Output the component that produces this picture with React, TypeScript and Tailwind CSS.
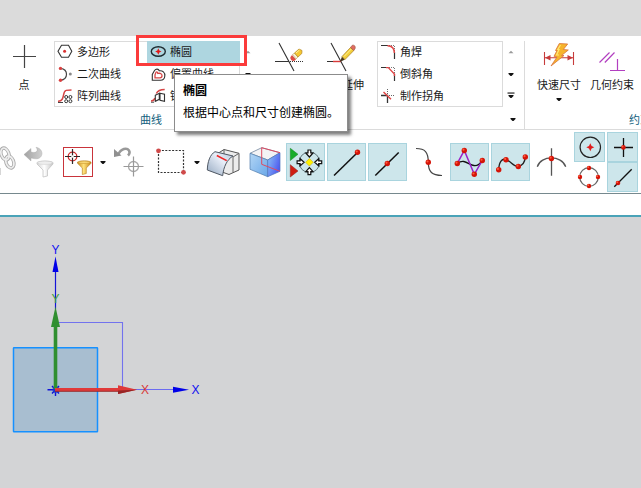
import React, { useState } from 'react'
import clsx from 'clsx'

interface GalleryItem {
  id: string
  label: string
  icon: React.ReactNode
}

interface DotProps {
  x: number
  y: number
  r?: number
}

function Dot({ x, y, r = 2.7 }: DotProps) {
  return (
    <g>
      <circle cx={x} cy={y} r={r} fill="#d41408" />
      <circle cx={x - 0.8} cy={y - 0.8} r={r * 0.4} fill="#ff5a3c" />
    </g>
  )
}

function Crosshair({ x, y, r, arm, ring, line }: { x: number; y: number; r: number; arm: number; ring: string; line: string }) {
  return (
    <g fill="none">
      <circle cx={x} cy={y} r={r} stroke={ring} strokeWidth="1.3" />
      <path d={`M${x - arm} ${y}H${x + arm}M${x} ${y - arm}V${y + arm}`} stroke={line} strokeWidth="1.2" />
    </g>
  )
}

function SmallIcon({ children }: { children: React.ReactNode }) {
  return (
    <svg viewBox="0 0 16 16" className="h-4 w-4 shrink-0" fill="none" aria-hidden="true">
      {children}
    </svg>
  )
}

function LargeIcon({ children }: { children: React.ReactNode }) {
  return (
    <svg viewBox="0 0 36 36" className="h-9 w-9" fill="none" aria-hidden="true">
      {children}
    </svg>
  )
}

const curveItems: GalleryItem[] = [
  {
    id: 'polygon',
    label: '多边形',
    icon: (
      <SmallIcon>
        <path d="M1 7.3L4.5 1.3H11.5L14.8 7.3L11.5 13.3H4.5Z" stroke="#333" strokeWidth="1.1" />
        <circle cx="7.6" cy="7.3" r="1.5" fill="#d93030" />
      </SmallIcon>
    ),
  },
  {
    id: 'ellipse',
    label: '椭圆',
    icon: (
      <SmallIcon>
        <ellipse cx="8.3" cy="7.5" rx="7" ry="4.8" stroke="#1d2b30" strokeWidth="1.4" />
        <path d="M8.3 4.3L9.3 6.5L11.5 7.5L9.3 8.5L8.3 10.7L7.3 8.5L5.1 7.5L7.3 6.5Z" fill="#e01818" />
      </SmallIcon>
    ),
  },
  {
    id: 'conic',
    label: '二次曲线',
    icon: (
      <SmallIcon>
        <path d="M3.5 2.3C11.5 3.3 11.5 13.3 3.5 14.3" stroke="#444" strokeWidth="1.2" />
        <circle cx="3.5" cy="2.4" r="1.7" fill="#d94040" />
        <circle cx="3.5" cy="14.3" r="1.7" fill="#d94040" />
        <circle cx="13.3" cy="8" r="1.5" fill="#888" />
      </SmallIcon>
    ),
  },
  {
    id: 'offset',
    label: '偏置曲线',
    icon: (
      <SmallIcon>
        <path d="M2.3 14.3V8.5L4.5 4.5C6 2.5 8.5 2.8 9.3 4.8C12.5 4.2 15.2 6.5 14.8 10C14.6 13 13 14.3 10.5 14.3Z" stroke="#333" strokeWidth="1.1" />
        <path d="M5 11.8V8.8L6 6.3C6.8 5.5 7.5 6 7.8 7.4C10.5 6.8 12.2 8 12 9.8C12 11.2 11.3 11.8 10 11.8Z" stroke="#d64545" strokeWidth="1.3" />
      </SmallIcon>
    ),
  },
  {
    id: 'pattern',
    label: '阵列曲线',
    icon: (
      <SmallIcon>
        <path d="M1 14.5H6" stroke="#444" />
        <path d="M1 13.2C8.5 13.5 5 3 9 2.4C10.5 2 12.5 2 14.5 2" stroke="#d64545" strokeWidth="1.5" />
        <g stroke="#333">
          <circle cx="9.2" cy="9" r="1.5" />
          <circle cx="13.4" cy="9" r="1.5" />
          <circle cx="9.2" cy="13.2" r="1.5" />
          <circle cx="13.4" cy="13.2" r="1.5" />
        </g>
      </SmallIcon>
    ),
  },
  {
    id: 'mirror',
    label: '镜像曲线',
    icon: (
      <SmallIcon>
        <path d="M1 14.2H4" stroke="#444" />
        <path d="M1 13C4 13 4.5 11.5 5 10M6.3 5.5C8 2 11 1.5 14.7 1.5" stroke="#d64545" strokeWidth="1.5" />
        <path d="M5.3 7.3L9.3 5.3V11.3L5.3 13.3ZM10 5.3L14.5 6.3V13.3L10 12.3Z" stroke="#333" strokeWidth="1.1" />
      </SmallIcon>
    ),
  },
]

const editItems: GalleryItem[] = [
  {
    id: 'fillet',
    label: '角焊',
    icon: (
      <SmallIcon>
        <path d="M1 1.5H8M14.5 8V15" stroke="#333" strokeWidth="1.2" />
        <path d="M9 1.5H14.5V8" stroke="#777" strokeDasharray="1 1" />
        <path d="M7.5 1.7C11.5 1.8 14.3 4.5 14.4 9" stroke="#e04545" strokeWidth="1.4" />
      </SmallIcon>
    ),
  },
  {
    id: 'chamfer',
    label: '倒斜角',
    icon: (
      <SmallIcon>
        <path d="M1 1.5H8M14.5 8V15" stroke="#333" strokeWidth="1.2" />
        <path d="M9 1.5H14.5V8" stroke="#777" strokeDasharray="1 1" />
        <path d="M6 1.6H8.3L14.4 8V10" stroke="#e04545" strokeWidth="1.4" />
      </SmallIcon>
    ),
  },
  {
    id: 'corner',
    label: '制作拐角',
    icon: (
      <SmallIcon>
        <path d="M1 7.5H7.5V15" stroke="#333" strokeWidth="1.3" />
        <path d="M7.5 1V7.5H14.5" stroke="#666" strokeDasharray="1 1" />
        <path d="M3.5 4L11 11.3" stroke="#e04545" strokeWidth="1.5" />
      </SmallIcon>
    ),
  },
]

function Caret({ up = false, bar = false }: { up?: boolean; bar?: boolean }) {
  return (
    <svg viewBox="0 0 8 8" className="h-2 w-2" aria-hidden="true">
      {bar && <path d="M0.5 0.5H7.5V1.6H0.5Z" fill="#111" />}
      {up ? <path d="M1.5 5.2H6.5L4 2.7Z" fill="#9a9a9a" /> : <path d="M1.5 3H6.5V4L4.5 6H3.5L1.5 4Z" fill="#111" />}
    </svg>
  )
}

function GalleryScroll() {
  return (
    <div className="flex w-4 flex-col">
      <button className="flex h-[22px] items-center justify-center" aria-label="上一行"><Caret up /></button>
      <button className="flex h-[22px] items-center justify-center" aria-label="下一行"><Caret /></button>
      <button className="flex h-[22px] items-center justify-center" aria-label="更多"><Caret bar /></button>
    </div>
  )
}

interface GalleryButtonProps {
  item: GalleryItem
  active?: boolean
  onClick?: () => void
  children?: React.ReactNode
}

function GalleryButton({ item, active, onClick, children }: GalleryButtonProps) {
  return (
    <div className="relative">
      <button
        onClick={onClick}
        className={clsx('flex h-[22px] w-full items-center gap-1 pl-[3px] whitespace-nowrap', active && 'bg-[#aed6e0]')}
      >
        {item.icon}
        <span className="pb-0.5">{item.label}</span>
      </button>
      {children}
    </div>
  )
}

function RibbonButton({ label, icon, caret = false }: { label: string; icon: React.ReactNode; caret?: boolean }) {
  return (
    <button className="flex w-[52px] shrink-0 flex-col items-center leading-[14px] whitespace-nowrap">
      {icon}
      <span>{label}</span>
      {caret && <span className="flex h-4 items-center"><Caret /></span>}
    </button>
  )
}

function EllipseTooltip() {
  return (
    <div
      role="tooltip"
      className="absolute top-[33px] left-[27px] z-20 w-[174px] border border-[#8c8c8c] bg-white px-2 pt-1 pb-2 text-xs leading-[22px] whitespace-nowrap text-black shadow-[3px_3px_3px_rgba(0,0,0,0.5)]"
    >
      <p className="font-bold">椭圆</p>
      <p>根据中心点和尺寸创建椭圆。</p>
    </div>
  )
}

function Ribbon() {
  const [activeCurve, setActiveCurve] = useState('ellipse')

  return (
    <header className="flex items-start border-b border-[#dbdbdb] bg-white pt-[5px] text-[11px] text-[#1a1a1a]">
      <button className="flex w-12 shrink-0 flex-col items-center leading-[14px]">
        <LargeIcon>
          <path d="M7 15.5H30M18.5 4V27" stroke="#444" strokeWidth="1.2" />
        </LargeIcon>
        <span>点</span>
      </button>

      {/* Curve gallery */}
      <section className="shrink-0 pl-1.5">
        <div className="flex">
          <div className="grid w-[186px] grid-cols-2 outline -outline-offset-1 outline-[#dbdbdb]">
            {curveItems.map((item) => (
              <GalleryButton key={item.id} item={item} active={item.id === activeCurve} onClick={() => setActiveCurve(item.id)}>
                {item.id === 'ellipse' && (
                  <>
                    <div className="pointer-events-none absolute -top-1.5 -right-[7px] -bottom-[3px] -left-[11px] z-10 border-3 border-[#fb3b3b]" />
                    <EllipseTooltip />
                  </>
                )}
              </GalleryButton>
            ))}
          </div>
          <GalleryScroll />
        </div>
        <div className="flex h-[22px] items-center justify-center pt-0.5 pr-2 text-[#12607c]">曲线</div>
      </section>

      {/* Trim and extend */}
      <div className="flex shrink-0 pl-2">
        <button className="flex w-[52px] justify-center" aria-label="快速修剪">
          <LargeIcon>
            <path d="M7 2L22 30M3 20.5H17.5" stroke="#333" strokeWidth="1.1" />
            <path d="M18 20.5H32" stroke="#333" strokeDasharray="1 1" />
            <path d="M20 14L24 18.5L22 20C19 20 18 17.5 18.5 16Z" fill="#dc4d45" />
            <path d="M20.5 13.5L22.5 12L26 16L24 18Z" fill="#f6f0d8" stroke="#b79b55" strokeWidth="0.6" />
            <path d="M22.5 12L27 8L30 9.5L29.8 12.5L26 16Z" fill="#f5c832" stroke="#b28422" strokeWidth="0.7" />
            <path d="M24 12L27.5 9" stroke="#fff2a0" />
          </LargeIcon>
        </button>
        <RibbonButton
          label="快速延伸"
          icon={
            <LargeIcon>
              <path d="M7 2L22 30M3 20.5H9" stroke="#333" strokeWidth="1.1" />
              <path d="M9 20.5H17" stroke="#d93a3a" strokeWidth="1.4" />
              <path d="M16 21L18 15.5L21 18.5Z" fill="#4a3a20" />
              <path d="M18 15.5L26.5 6.5L29.8 9.5L21 18.5Z" fill="#f3cf3a" stroke="#a67d23" strokeWidth="0.7" />
              <path d="M26.5 6.5L28 4.5C30 3.3 32 5.3 31 7.8L29.8 9.5Z" fill="#df6d62" stroke="#9c5240" strokeWidth="0.6" />
              <path d="M20 15.5L27.3 8" stroke="#fff19a" />
            </LargeIcon>
          }
        />
      </div>

      {/* Corner gallery */}
      <section className="shrink-0 pr-[5px] pl-[9px]">
        <div className="flex">
          <div className="w-[126px] outline -outline-offset-1 outline-[#dbdbdb]">
            {editItems.map((item) => (
              <GalleryButton key={item.id} item={item} />
            ))}
          </div>
          <GalleryScroll />
        </div>
        <div className="flex h-[22px] items-center justify-end pt-0.5">
          <button className="flex h-4 w-3 items-center justify-center" aria-label="曲线选项"><Caret /></button>
        </div>
      </section>

      {/* Constraints */}
      <section className="w-[231px] shrink-0 border-l border-[#dbdbdb]">
        <div className="flex h-[66px] gap-px pl-2">
          <RibbonButton
            label="快速尺寸"
            caret
            icon={
              <LargeIcon>
                <path d="M3.5 11V24M32.5 11V24M4 16.7H32" stroke="#c73c3c" strokeWidth="1.1" />
                <path d="M4 16.7L9.5 14V19.4ZM32 16.7L26.5 14V19.4Z" fill="#c73c3c" />
                <path d="M18.3 2.5L26.7 3L22.3 8.5L27.3 9L20.5 14.5H23L10 25L16 16L13 15.3L16 9.5H14.5Z" fill="#f6b42c" stroke="#d9743a" strokeWidth="0.8" />
                <path d="M19.5 4L16.8 8.5H18L15.5 14H18" stroke="#ffe672" strokeWidth="1.2" />
              </LargeIcon>
            }
          />
          <RibbonButton
            label="几何约束"
            icon={
              <LargeIcon>
                <path d="M5.5 21.5L15.5 11.5M10.8 21.5L20.5 11.5M23.5 18V29.5M16 29.5H31" stroke="#b23fc0" strokeWidth="1.2" />
              </LargeIcon>
            }
          />
        </div>
        <div className="flex h-[22px] items-center justify-center pt-0.5 text-[#12607c]">约束</div>
      </section>
    </header>
  )
}

function ToolIcon({ label, children }: { label: string; children: React.ReactNode }) {
  return (
    <button className="w-10 shrink-0" aria-label={label}>
      <svg viewBox="0 0 40 38" className="h-[38px] w-10" fill="none">
        {children}
      </svg>
    </button>
  )
}

interface SnapButtonProps {
  label: string
  on?: boolean
  small?: boolean
  children: React.ReactNode
}

function SnapButton({ label, on = true, small = false, children }: SnapButtonProps) {
  const [pressed, setPressed] = useState(on)

  return (
    <button
      aria-label={label}
      aria-pressed={pressed}
      onClick={() => setPressed(!pressed)}
      className={clsx(
        'shrink-0 border',
        small ? 'h-[30px] w-[31px]' : 'h-[38px] w-[39px]',
        pressed ? 'border-[#a9d4de] bg-[#cde6eb]' : 'border-transparent'
      )}
    >
      <svg viewBox={small ? '0 0 29 28' : '0 0 37 36'} className="h-full w-full" fill="none">
        {children}
      </svg>
    </button>
  )
}

function DropButton({ label }: { label: string }) {
  return (
    <button className="flex h-[30px] w-3.5 shrink-0 items-center justify-center" aria-label={label}>
      <Caret />
    </button>
  )
}

function Toolbar() {
  return (
    <div className="flex items-center border-b border-[#76898e] bg-white pt-0.5 pb-px">
      <svg viewBox="0 0 20 38" className="h-[38px] w-5 shrink-0" fill="none" aria-hidden="true">
        <g stroke="#aaa" strokeWidth="3.4">
          <ellipse cx="5" cy="11" rx="3.8" ry="6.2" transform="rotate(-20 5 11)" />
          <ellipse cx="9.8" cy="19" rx="3.8" ry="6.2" transform="rotate(-20 9.8 19)" />
        </g>
        <g stroke="#eee" strokeWidth="1.7">
          <ellipse cx="5" cy="11" rx="3.8" ry="6.2" transform="rotate(-20 5 11)" />
          <ellipse cx="9.8" cy="19" rx="3.8" ry="6.2" transform="rotate(-20 9.8 19)" />
        </g>
        <path d="M0 25H0.8V32H0Z" fill="#ccc" />
      </svg>
      <ToolIcon label="重置过滤器">
        <defs>
          <linearGradient id="greyFunnel">
            <stop offset="0" stopColor="#d2d2d2" />
            <stop offset="0.45" stopColor="#fff" />
            <stop offset="1" stopColor="#c4c4c4" />
          </linearGradient>
          <linearGradient id="greyArrow" x1="0" y1="0" x2="1" y2="0">
            <stop offset="0" stopColor="#a2a2a2" />
            <stop offset="1" stopColor="#d0d0d0" />
          </linearGradient>
        </defs>
        <path d="M4 11.5L11 5.5V9C16 10.5 19 8 16 4.3C21 5 23.5 10 21 13.5C19 16.5 15 16 11 15V18Z" fill="url(#greyArrow)" stroke="#a5a5a5" strokeWidth="0.4" />
        <path d="M17 19.5C20 17.5 30 17.5 33 19.5V21L27.5 27V33L23 34V27L17 21Z" fill="url(#greyFunnel)" stroke="#c4c4c4" strokeWidth="0.8" />
        <ellipse cx="25" cy="19.8" rx="7.6" ry="1.6" fill="#eee" stroke="#ccc" strokeWidth="0.5" />
      </ToolIcon>
      <button className="mx-[3px] h-[30px] w-[30px] shrink-0 border border-[#c9343b]" aria-label="选择过滤器">
        <svg viewBox="0 0 28 28" className="h-full w-full" fill="none">
          <defs>
            <linearGradient id="goldFunnel">
              <stop offset="0" stopColor="#c9891c" />
              <stop offset="0.45" stopColor="#ffe27b" />
              <stop offset="1" stopColor="#c78617" />
            </linearGradient>
          </defs>
          <Crosshair x={8.5} y={8.5} r={4.3} arm={7.5} ring="#cf2b2b" line="#302828" />
          <circle cx="8.5" cy="8.5" r="1.2" fill="#fff" />
          <path d="M13.5 14C16 12.5 24.5 12.5 27 14V15.3L22.3 20V25.5L18.3 26.5V20L13.5 15.3Z" fill="url(#goldFunnel)" stroke="#b67d1c" strokeWidth="0.6" />
          <ellipse cx="20.2" cy="14.3" rx="5.8" ry="1.2" fill="#f7d777" stroke="#c38a20" strokeWidth="0.5" />
        </svg>
      </button>
      <DropButton label="过滤器选项" />
      <ToolIcon label="重置捕捉点">
        <path d="M8 12C11 5 17 4.5 19 7.5C20 9 19.5 11 18 12.5" stroke="#999" strokeWidth="2.5" />
        <path d="M4 14V6L11.5 12.5Z" fill="#909090" />
        <Crosshair x={23.5} y={23.5} r={5} arm={10} ring="#aaa" line="#999" />
      </ToolIcon>
      <ToolIcon label="矩形选择">
        <rect x="8.5" y="7.5" width="25" height="22" stroke="#333" strokeWidth="1.2" strokeDasharray="2 1.4" />
        <circle cx="8.5" cy="7.8" r="2.4" fill="#d04a4a" />
        <circle cx="33.5" cy="29.3" r="2.4" fill="#d04a4a" />
      </ToolIcon>
      <DropButton label="选择方式" />
      <ToolIcon label="面规则">
        <defs>
          <linearGradient id="sheet" x1="0" y1="1" x2="1" y2="0">
            <stop offset="0" stopColor="#94a8c0" />
            <stop offset="0.6" stopColor="#e8eef8" />
            <stop offset="1" stopColor="#b7c5d8" />
          </linearGradient>
        </defs>
        <path d="M14.5 10L20 6.5L35 10.3V27L25 31.5L18 29V14Z" fill="#ececec" stroke="#555" />
        <path d="M35 10.3L29 14V29.5M20 6.5V12" stroke="#666" />
        <path d="M3.3 27C3.5 19 6 11.5 11 8.7L29 13C23 16.5 19.5 24 18.7 32.7Z" fill="url(#sheet)" stroke="#4f5864" />
        <path d="M12.8 12.5L22.7 17.6" stroke="#f02525" strokeWidth="1.6" />
      </ToolIcon>
      <ToolIcon label="实体">
        <defs>
          <linearGradient id="cubeLeft" x1="0" y1="0" x2="1" y2="1">
            <stop offset="0" stopColor="#b3d6f5" />
            <stop offset="1" stopColor="#69a7e8" />
          </linearGradient>
          <linearGradient id="cubeRight" x1="0" y1="0" x2="1" y2="0.6">
            <stop offset="0" stopColor="#8ec9f5" />
            <stop offset="1" stopColor="#4e58ef" />
          </linearGradient>
        </defs>
        <path d="M6 10.3L17.7 4.7L36 9.7L23.7 17Z" fill="#f3f3f5" stroke="#5f7590" strokeWidth="0.7" />
        <path d="M6 10.3L23.7 17V33.7L6 26.3Z" fill="url(#cubeLeft)" stroke="#517dac" strokeWidth="0.7" />
        <path d="M23.7 17L36 9.7V28.3L23.7 33.7Z" fill="url(#cubeRight)" stroke="#4f75bb" strokeWidth="0.7" />
        <path d="M36 9.7L17.7 4.7V21.3L36 28.3" stroke="#dd4a62" />
      </ToolIcon>

      {/* Snap point toggles */}
      <div className="ml-0.5 flex items-center gap-0.5">
        <SnapButton label="启用捕捉点">
          <circle cx="22.4" cy="18.3" r="10.3" stroke="#62777d" />
          <path d="M3.3 4.3L11 10.3L3.3 16.5Z" fill="#18ad2b" stroke="#168427" strokeWidth="0.5" />
          <path d="M3.3 20.7L11 27L3.3 33Z" fill="#cf1d12" stroke="#8d1c14" strokeWidth="0.5" />
          <path d="M22.4 14.5L26.2 18.3L22.4 22.1L18.6 18.3Z" fill="#fff000" stroke="#c7a917" strokeWidth="0.6" />
          <g fill="#fff" stroke="#111" strokeWidth="1.2">
            <path d="M21 6H23.8V9H26L22.4 13L18.8 9H21Z" />
            <path d="M21 30.6H23.8V27.6H26L22.4 23.6L18.8 27.6H21Z" />
            <path d="M10.1 16.9V19.7H13.1V21.9L17.1 18.3L13.1 14.7V16.9Z" />
            <path d="M34.7 16.9V19.7H31.7V21.9L27.7 18.3L31.7 14.7V16.9Z" />
          </g>
        </SnapButton>
        <SnapButton label="终点">
          <path d="M6 31.5L29.5 8.5" stroke="#111" strokeWidth="1.5" />
          <Dot x={29.5} y={8.3} />
        </SnapButton>
        <SnapButton label="中点">
          <path d="M6.3 31.5L29.7 8.5" stroke="#111" strokeWidth="1.5" />
          <Dot x={18.3} y={19.5} />
        </SnapButton>
        <SnapButton label="控制点" on={false}>
          <path d="M6 4.5C15 4.5 18.3 8 18.3 18.3C18.3 28 22 31.5 32 31.5" stroke="#444" strokeWidth="1.2" />
          <Dot x={18.3} y={18.3} />
        </SnapButton>
        <SnapButton label="极点">
          <path d="M6.3 19.3C14 14 18 21.5 23 21.5C27 22 29 20 31.3 16.3" stroke="#111" strokeWidth="1.3" />
          <path d="M6.3 19.3L13.3 6.5L23.3 30.3L31.3 16.3" stroke="#9a22c8" strokeWidth="1.5" />
          <Dot x={6.3} y={19.5} />
          <Dot x={13.3} y={6.5} />
          <Dot x={23.3} y={30.3} />
          <Dot x={31.3} y={16.5} />
        </SnapButton>
        <SnapButton label="定义点">
          <path d="M6.7 25.7C7 18 10 14 14 15.7C19 17 21.5 23 26.3 22.3C31 21.5 33 17 33.3 13" stroke="#222" strokeWidth="1.4" />
          <Dot x={6.7} y={25.7} />
          <Dot x={14} y={15.7} />
          <Dot x={26.3} y={22.5} />
          <Dot x={33.3} y={13} />
        </SnapButton>
        <SnapButton label="交点" on={false}>
          <path d="M4.3 22.7C8 11 28.6 11 32.7 22.7M18.5 4.3V31.7" stroke="#555" strokeWidth="1.3" />
          <Dot x={18.4} y={14.5} />
        </SnapButton>
        <div className="grid grid-cols-2 gap-x-0.5 pl-px">
          <SnapButton label="圆弧中心" small>
            <circle cx="15.3" cy="14.3" r="10.2" stroke="#222" strokeWidth="1.2" />
            <path d="M15.3 10.3L16.6 13L19.3 14.3L16.6 15.6L15.3 18.3L14 15.6L11.3 14.3L14 13Z" fill="#e01c1c" />
          </SnapButton>
          <SnapButton label="现有点" small>
            <path d="M6 14.5H25M15.5 5V24" stroke="#111" strokeWidth="1.3" />
            <Dot x={15.4} y={14.4} r={2.3} />
          </SnapButton>
          <SnapButton label="象限点" small on={false}>
            <circle cx="14" cy="14" r="9.3" stroke="#666" strokeWidth="1.2" />
            <Dot x={14} y={5} r={2.2} />
            <Dot x={14} y={23} r={2.2} />
            <Dot x={5} y={14} r={2.2} />
            <Dot x={23} y={14} r={2.2} />
          </SnapButton>
          <SnapButton label="曲线上的点" small>
            <path d="M6.3 23.7L23.7 6.3" stroke="#111" strokeWidth="1.3" />
            <Dot x={10} y={20} r={2.3} />
          </SnapButton>
        </div>
      </div>
    </div>
  )
}

function Viewport() {
  return (
    <main className="flex-1 border-t-2 border-[#4aa3b8] bg-[#d3d4d6]">
      <svg viewBox="0 0 220 230" className="h-[230px] w-[220px]" fill="none" role="img" aria-label="坐标系">
        <rect x="13.5" y="130.8" width="84" height="84" rx="0.5" fill="#a8bed0" stroke="#1590ff" strokeWidth="1.5" />
        <path d="M56 105.5H122.5V172" stroke="#7272ee" strokeWidth="1.1" />

        {/* Work coordinate axes */}
        <path d="M130 172.5H174" stroke="#6c6cf0" />
        <path d="M173 169.7L189 172.7L173 175.7Z" fill="#0000e8" />
        <path d="M55.5 54V92" stroke="#1414d8" strokeWidth="1.2" />
        <path d="M52.5 55L55.5 39.5L58.5 55Z" fill="#0000e8" />
        <path d="M47.5 172.7H60M55.5 167V179M52 169L59 176.5M59 169L52 176.5" stroke="#1010d8" strokeWidth="1.4" />
        <circle cx="56" cy="172.7" r="3.5" fill="#1c3fd0" fillOpacity="0.7" />

        {/* Datum axes */}
        <path d="M55.5 172V108" stroke="#2f8f30" strokeWidth="3.6" />
        <path d="M51 110L55.5 89.5L60 110Z" fill="#2f8f30" />
        <path d="M55 172.5H119" stroke="#e03a3a" strokeWidth="3.2" />
        <path d="M55 174.3H119" stroke="#9c2929" />
        <path d="M118 168.3L137 172.7L118 177Z" fill="#df3838" />
        <path d="M118 173.5L137 172.7L118 177Z" fill="#962525" />

        <g fontFamily="Liberation Sans, sans-serif" fontSize="12" textAnchor="middle">
          <text x="55.5" y="37" fill="#1010f0">Y</text>
          <text x="55.5" y="86" fill="#3d9c40">Y</text>
          <text x="145" y="177" fill="#d83a3a">X</text>
          <text x="195.5" y="177" fill="#1010f0">X</text>
        </g>
      </svg>
    </main>
  )
}

export default function App() {
  return (
    <div className="flex min-h-screen flex-col overflow-hidden bg-white font-['Noto_Sans_CJK_SC',sans-serif]">
      <div className="h-9 bg-[#dbdbdb]" />
      <Ribbon />
      <Toolbar />
      <div className="h-[21px] bg-white" />
      <Viewport />
    </div>
  )
}
